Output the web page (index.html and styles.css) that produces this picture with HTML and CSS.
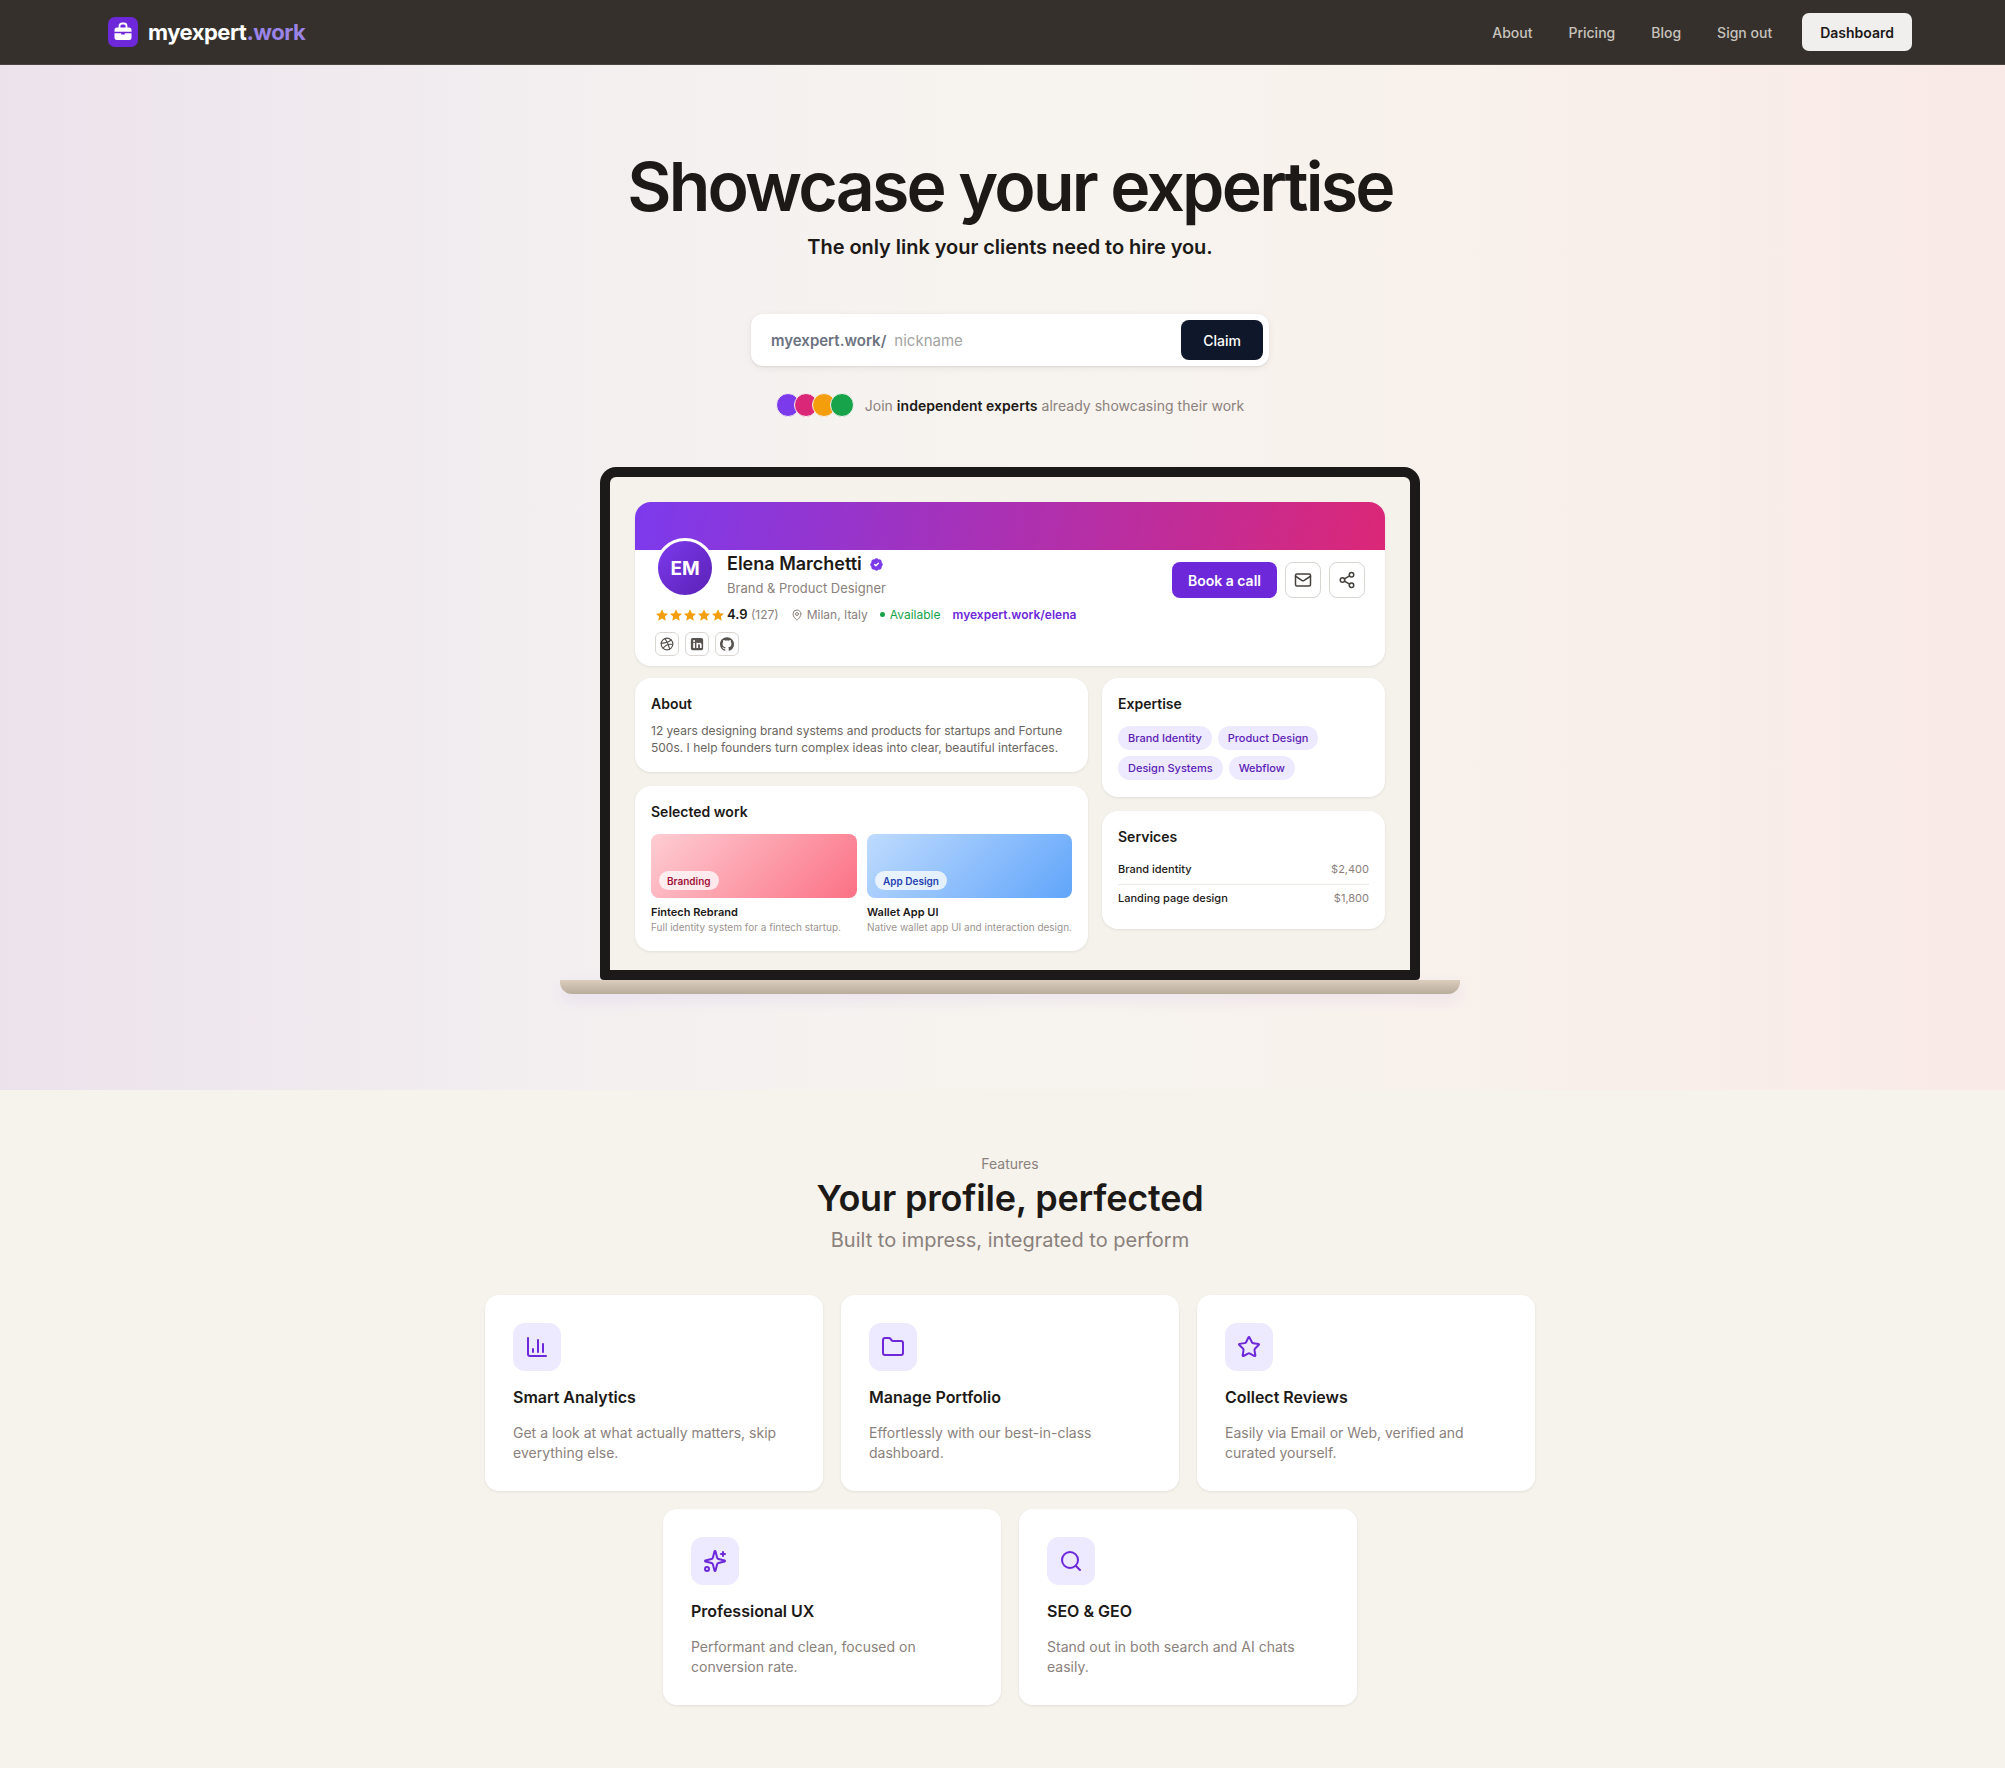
FILE: index.html
```html
<!DOCTYPE html>
<html>
<head>
    <title>myexpert.work</title>
    <meta charset="UTF-8">
    <meta name="viewport" content="width=device-width, initial-scale=1.0">
    <link rel="stylesheet" href="styles.css">
</head>
<body>
    <div class="page">
        <header class="topbar">
            <a class="logo" href="#">
                <span class="logo-mark">
                    <svg width="22" height="22" viewBox="0 0 22 22">
                        <path d="M7.500 7V5A2.500 2.500 0 0 1 10 2.500h2A2.500 2.500 0 0 1 14.500 5v2" fill="none" stroke="#fff" stroke-width="1.800"/>
                        <path d="M5 6.500h12a2.500 2.500 0 0 1 2.500 2.500v1.800H2.500V9A2.500 2.500 0 0 1 5 6.500z" fill="#fff"/>
                        <path d="M2.500 12.200h6.700v1.300h3.600v-1.300h6.700v4.300a2.500 2.500 0 0 1-2.500 2.500H5a2.500 2.500 0 0 1-2.500-2.500z" fill="#fff"/>
                    </svg>
                </span>
                <span class="logo-text">myexpert<em>.work</em></span>
            </a>
            <nav class="topnav">
                <a href="#">About</a>
                <a href="#">Pricing</a>
                <a href="#">Blog</a>
                <a href="#">Sign out</a>
                <a class="dash-button" href="#">Dashboard</a>
            </nav>
        </header>

        <section class="hero">
            <h1>Showcase your expertise</h1>
            <p class="hero-sub">The only link your clients need to hire you.</p>

            <form class="claim-form">
                <span class="claim-prefix">myexpert.work/</span>
                <input class="claim-input" type="text" placeholder="nickname">
                <button class="claim-button" type="button">Claim</button>
            </form>

            <div class="join-row">
                <div class="join-dots">
                    <span class="dot-purple"></span>
                    <span class="dot-pink"></span>
                    <span class="dot-amber"></span>
                    <span class="dot-green"></span>
                </div>
                <p>Join <strong>independent experts</strong> already showcasing their work</p>
            </div>

            <div class="laptop">
                <div class="laptop-frame">
                    <div class="laptop-screen">
                        <div class="profile-card">
                            <div class="profile-banner"></div>
                            <div class="profile-body">
                                <div class="profile-head">
                                    <div class="avatar">EM</div>
                                    <div class="profile-info">
                                        <div class="profile-name">
                                            Elena Marchetti
                                            <svg width="15" height="15" viewBox="0 0 24 24">
                                                <path d="M3.850 8.620a4 4 0 0 1 4.780-4.770 4 4 0 0 1 6.740 0 4 4 0 0 1 4.780 4.780 4 4 0 0 1 0 6.740 4 4 0 0 1-4.770 4.780 4 4 0 0 1-6.750 0 4 4 0 0 1-4.780-4.770 4 4 0 0 1 0-6.760z" fill="#7c3aed"/>
                                                <path d="m9 12 2 2 4-4" fill="none" stroke="#fff" stroke-width="2.400" stroke-linecap="round" stroke-linejoin="round"/>
                                            </svg>
                                        </div>
                                        <div class="profile-role">Brand &amp; Product Designer</div>
                                    </div>
                                    <div class="profile-actions">
                                        <button class="book-button" type="button">Book a call</button>
                                        <button class="icon-button" type="button">
                                            <svg width="18" height="18" viewBox="0 0 24 24" fill="none" stroke="#44403c" stroke-width="2" stroke-linecap="round" stroke-linejoin="round">
                                                <rect x="2" y="4" width="20" height="16" rx="2"/>
                                                <path d="m22 7-8.970 5.700a1.940 1.940 0 0 1-2.060 0L2 7"/>
                                            </svg>
                                        </button>
                                        <button class="icon-button" type="button">
                                            <svg width="18" height="18" viewBox="0 0 24 24" fill="none" stroke="#44403c" stroke-width="2" stroke-linecap="round" stroke-linejoin="round">
                                                <circle cx="18" cy="5" r="3"/>
                                                <circle cx="6" cy="12" r="3"/>
                                                <circle cx="18" cy="19" r="3"/>
                                                <path d="m8.590 13.510 6.830 3.980"/>
                                                <path d="m15.410 6.510-6.820 3.980"/>
                                            </svg>
                                        </button>
                                    </div>
                                </div>
                                <div class="profile-meta">
                                    <span class="stars">
                                        <svg width="14" height="14" viewBox="1.500 1.500 21 21"><path d="m12 3.500 2.700 5.700 6.300.800-4.600 4.300 1.200 6.200-5.600-3.100-5.600 3.100 1.200-6.200L3 10l6.300-.800z"/></svg>
                                        <svg width="14" height="14" viewBox="1.500 1.500 21 21"><path d="m12 3.500 2.700 5.700 6.300.800-4.600 4.300 1.200 6.200-5.600-3.100-5.600 3.100 1.200-6.200L3 10l6.300-.800z"/></svg>
                                        <svg width="14" height="14" viewBox="1.500 1.500 21 21"><path d="m12 3.500 2.700 5.700 6.300.800-4.600 4.300 1.200 6.200-5.600-3.100-5.600 3.100 1.200-6.200L3 10l6.300-.800z"/></svg>
                                        <svg width="14" height="14" viewBox="1.500 1.500 21 21"><path d="m12 3.500 2.700 5.700 6.300.800-4.600 4.300 1.200 6.200-5.600-3.100-5.600 3.100 1.200-6.200L3 10l6.300-.800z"/></svg>
                                        <svg width="14" height="14" viewBox="1.500 1.500 21 21"><path d="m12 3.500 2.700 5.700 6.300.800-4.600 4.300 1.200 6.200-5.600-3.100-5.600 3.100 1.200-6.200L3 10l6.300-.800z"/></svg>
                                    </span>
                                    <span class="rating"><strong>4.9</strong> <span>(127)</span></span>
                                    <span class="location">
                                        <svg width="12" height="12" viewBox="0 0 24 24" fill="none" stroke="#8a817c" stroke-width="2" stroke-linecap="round" stroke-linejoin="round">
                                            <path d="M20 10c0 5-5.500 10.200-7.400 11.800a1 1 0 0 1-1.200 0C9.500 20.200 4 15 4 10a8 8 0 0 1 16 0"/>
                                            <circle cx="12" cy="10" r="3"/>
                                        </svg>
                                        Milan, Italy
                                    </span>
                                    <span class="available">Available</span>
                                    <a class="profile-link" href="#">myexpert.work/elena</a>
                                </div>
                                <div class="profile-socials">
                                    <span class="social-icon">
                                        <svg width="14" height="14" viewBox="0 0 24 24" fill="none" stroke="#57534e" stroke-width="2" stroke-linecap="round">
                                            <circle cx="12" cy="12" r="10"/>
                                            <path d="M19.130 5.090C15.220 9.140 10 10.440 2.250 10.940"/>
                                            <path d="M21.750 12.840c-6.620-1.410-12.140 1-16.380 6.320"/>
                                            <path d="M8.560 2.750c4.370 6 6 9.420 8 17.720"/>
                                        </svg>
                                    </span>
                                    <span class="social-icon">
                                        <svg width="14" height="14" viewBox="0 0 24 24">
                                            <rect x="1.500" y="1.500" width="21" height="21" rx="3" fill="#57534e"/>
                                            <rect x="5.500" y="10" width="3" height="9" fill="#fff"/>
                                            <circle cx="7" cy="6.800" r="1.800" fill="#fff"/>
                                            <path d="M11 10h2.800v1.300c.6-1 1.700-1.500 2.800-1.500 2.500 0 3.400 1.600 3.400 4.100V19h-3v-4.500c0-1.200-.4-2-1.500-2-1.200 0-1.600.9-1.600 2V19H11z" fill="#fff"/>
                                        </svg>
                                    </span>
                                    <span class="social-icon">
                                        <svg width="14" height="14" viewBox="0 0 24 24" fill="#57534e">
                                            <path d="M12 .297c-6.630 0-12 5.373-12 12 0 5.303 3.438 9.800 8.205 11.385.600.113.820-.258.820-.577 0-.285-.010-1.040-.015-2.040-3.338.724-4.042-1.610-4.042-1.610C4.422 18.070 3.633 17.700 3.633 17.700c-1.087-.744.084-.729.084-.729 1.205.084 1.838 1.236 1.838 1.236 1.070 1.835 2.809 1.305 3.495.998.108-.776.417-1.305.760-1.605-2.665-.300-5.466-1.332-5.466-5.930 0-1.310.465-2.380 1.235-3.220-.135-.303-.540-1.523.105-3.176 0 0 1.005-.322 3.300 1.230.960-.267 1.980-.399 3-.405 1.020.006 2.040.138 3 .405 2.280-1.552 3.285-1.230 3.285-1.230.645 1.653.240 2.873.120 3.176.765.840 1.230 1.910 1.230 3.220 0 4.610-2.805 5.625-5.475 5.920.420.360.810 1.096.810 2.220 0 1.606-.015 2.896-.015 3.286 0 .315.210.690.825.570C20.565 22.092 24 17.592 24 12.297c0-6.627-5.373-12-12-12"/>
                                        </svg>
                                    </span>
                                </div>
                            </div>
                        </div>

                        <div class="profile-grid">
                            <div class="profile-col">
                                <div class="mini-card">
                                    <h3>About</h3>
                                    <p class="about-text">12 years designing brand systems and products for startups and Fortune 500s. I help founders turn complex ideas into clear, beautiful interfaces.</p>
                                </div>
                                <div class="mini-card">
                                    <h3>Selected work</h3>
                                    <div class="work-grid">
                                        <div class="work-item">
                                            <div class="work-thumb thumb-pink"><span class="thumb-tag tag-rose">Branding</span></div>
                                            <div class="work-title">Fintech Rebrand</div>
                                            <div class="work-desc">Full identity system for a fintech startup.</div>
                                        </div>
                                        <div class="work-item">
                                            <div class="work-thumb thumb-blue"><span class="thumb-tag tag-blue">App Design</span></div>
                                            <div class="work-title">Wallet App UI</div>
                                            <div class="work-desc">Native wallet app UI and interaction design.</div>
                                        </div>
                                    </div>
                                </div>
                            </div>
                            <div class="profile-col">
                                <div class="mini-card">
                                    <h3>Expertise</h3>
                                    <div class="tag-list">
                                        <span>Brand Identity</span>
                                        <span>Product Design</span>
                                        <span>Design Systems</span>
                                        <span>Webflow</span>
                                    </div>
                                </div>
                                <div class="mini-card">
                                    <h3>Services</h3>
                                    <div class="service-row"><span>Brand identity</span><span class="price">$2,400</span></div>
                                    <div class="service-row"><span>Landing page design</span><span class="price">$1,800</span></div>
                                </div>
                            </div>
                        </div>
                    </div>
                </div>
                <div class="laptop-base"></div>
            </div>
        </section>

        <section class="features">
            <div class="features-label">Features</div>
            <h2>Your profile, perfected</h2>
            <p class="features-sub">Built to impress, integrated to perform</p>

            <div class="feature-grid">
                <div class="feature-card">
                    <div class="feature-icon">
                        <svg width="24" height="24" viewBox="0 0 24 24" fill="none" stroke="currentColor" stroke-width="2" stroke-linecap="round" stroke-linejoin="round">
                            <path d="M3 3v16a2 2 0 0 0 2 2h16"/>
                            <path d="M8 17v-3"/>
                            <path d="M13 17V5"/>
                            <path d="M18 17V9"/>
                        </svg>
                    </div>
                    <h3>Smart Analytics</h3>
                    <p>Get a look at what actually matters, skip everything else.</p>
                </div>
                <div class="feature-card">
                    <div class="feature-icon">
                        <svg width="24" height="24" viewBox="0 0 24 24" fill="none" stroke="currentColor" stroke-width="2" stroke-linecap="round" stroke-linejoin="round">
                            <path d="M20 20a2 2 0 0 0 2-2V8a2 2 0 0 0-2-2h-7.900a2 2 0 0 1-1.690-.9L9.600 3.900A2 2 0 0 0 7.930 3H4a2 2 0 0 0-2 2v13a2 2 0 0 0 2 2Z"/>
                        </svg>
                    </div>
                    <h3>Manage Portfolio</h3>
                    <p>Effortlessly with our best-in-class dashboard.</p>
                </div>
                <div class="feature-card">
                    <div class="feature-icon">
                        <svg width="24" height="24" viewBox="0 0 24 24" fill="none" stroke="currentColor" stroke-width="2" stroke-linecap="round" stroke-linejoin="round">
                            <path d="M11.520 2.300a.530.530 0 0 1 .960 0l2.310 4.680a2.120 2.120 0 0 0 1.600 1.160l5.160.760a.530.530 0 0 1 .300.910l-3.740 3.640a2.120 2.120 0 0 0-.610 1.880l.880 5.140a.530.530 0 0 1-.780.560l-4.620-2.430a2.120 2.120 0 0 0-1.970 0L6.400 21.010a.530.530 0 0 1-.770-.560l.880-5.140a2.120 2.120 0 0 0-.610-1.880L2.160 9.790a.530.530 0 0 1 .290-.910l5.170-.760a2.120 2.120 0 0 0 1.590-1.160z"/>
                        </svg>
                    </div>
                    <h3>Collect Reviews</h3>
                    <p>Easily via Email or Web, verified and curated yourself.</p>
                </div>
                <div class="feature-card">
                    <div class="feature-icon">
                        <svg width="24" height="24" viewBox="0 0 24 24" fill="none" stroke="currentColor" stroke-width="2" stroke-linecap="round" stroke-linejoin="round">
                            <path d="M9.940 15.500A2 2 0 0 0 8.500 14.060l-6.130-1.580a.500.500 0 0 1 0-.960L8.500 9.940A2 2 0 0 0 9.940 8.500l1.580-6.130a.500.500 0 0 1 .960 0L14.060 8.500A2 2 0 0 0 15.500 9.940l6.130 1.580a.500.500 0 0 1 0 .960L15.500 14.060a2 2 0 0 0-1.440 1.440l-1.580 6.130a.500.500 0 0 1-.960 0z"/>
                            <path d="M20 3v4"/>
                            <path d="M22 5h-4"/>
                            <circle cx="4" cy="20" r="2"/>
                        </svg>
                    </div>
                    <h3>Professional UX</h3>
                    <p>Performant and clean, focused on conversion rate.</p>
                </div>
                <div class="feature-card">
                    <div class="feature-icon">
                        <svg width="24" height="24" viewBox="0 0 24 24" fill="none" stroke="currentColor" stroke-width="2" stroke-linecap="round" stroke-linejoin="round">
                            <circle cx="11" cy="11" r="8"/>
                            <path d="m21 21-4.300-4.300"/>
                        </svg>
                    </div>
                    <h3>SEO &amp; GEO</h3>
                    <p>Stand out in both search and AI chats easily.</p>
                </div>
            </div>
        </section>
    </div>
</body>
</html>
```

FILE: styles.css
```css
html {
    overflow-x: hidden;
}
body {
    margin: 0;
    font-family: Inter, "Liberation Sans", sans-serif;
    background: #f6f3ed;
    color: #1c1917;
}
a {
    text-decoration: none;
    color: inherit;
}
.page {
    width: 2020px;
}

/* top bar */
.topbar {
    height: 64px;
    padding: 0 108px;
    display: flex;
    align-items: center;
    justify-content: space-between;
    background: #35302c;
    border-bottom: 1px solid #4a4540;
}
.logo {
    display: flex;
    align-items: center;
    gap: 10px;
}
.logo-mark {
    width: 30px;
    height: 30px;
    border-radius: 7px;
    background: #6d28d9;
    display: flex;
    align-items: center;
    justify-content: center;
}
.logo-text {
    color: #fff;
    font-size: 22px;
    font-weight: 700;
    letter-spacing: -0.5px;
}
.logo-text em {
    font-style: normal;
    color: #9a84e6;
}
.topnav {
    display: flex;
    align-items: center;
    gap: 36px;
    font-size: 14px;
    font-weight: 500;
    color: #c8c3bd;
}
.dash-button {
    margin-left: -6px;
    height: 38px;
    padding: 0 18px;
    display: flex;
    align-items: center;
    border-radius: 7px;
    background: #f0efed;
    color: #1c1917;
    font-weight: 600;
}

/* hero */
.hero {
    padding: 84px 0 96px;
    display: flex;
    flex-direction: column;
    align-items: center;
    background: linear-gradient(90deg, #ece2ec 0%, #f3eff0 28%, #f7f4ef 50%, #f8f1ec 72%, #f9e9e7 100%);
}
.hero h1 {
    margin: 0;
    font-size: 68px;
    line-height: 75px;
    font-weight: 600;
    letter-spacing: -2.8px;
    color: #1c1917;
}
.hero-sub {
    margin: 9px 0 0;
    font-size: 20px;
    line-height: 28px;
    font-weight: 600;
    letter-spacing: -0.05px;
}
.claim-form {
    margin-top: 53px;
    width: 518px;
    height: 52px;
    box-sizing: border-box;
    padding: 0 6px 0 20px;
    display: flex;
    align-items: center;
    background: #fff;
    border-radius: 12px;
    box-shadow: 0 1px 2px rgba(0,0,0,0.08), 0 2px 8px rgba(0,0,0,0.06);
}
.claim-prefix {
    font-size: 15px;
    font-weight: 600;
    color: #6b7280;
}
.claim-input {
    flex: 1;
    min-width: 0;
    margin-left: 8px;
    padding: 0;
    border: none;
    outline: none;
    background: none;
    font-family: inherit;
    font-size: 15px;
}
.claim-input::placeholder {
    color: #a3a3a3;
}
.claim-button {
    width: 82px;
    height: 40px;
    border: none;
    border-radius: 8px;
    background: #0f172a;
    color: #fff;
    font-family: inherit;
    font-size: 14px;
    font-weight: 500;
}
.join-row {
    margin-top: 27px;
    display: flex;
    align-items: center;
    gap: 11px;
    font-size: 14px;
    letter-spacing: 0.03px;
    color: #8a817c;
}
.join-row p {
    margin: 0;
}
.join-row strong {
    color: #1c1917;
    font-weight: 600;
}
.join-dots {
    display: flex;
}
.join-dots span {
    width: 24px;
    height: 24px;
    margin-left: -6px;
    border-radius: 50%;
    border: 1px solid #f6f2ef;
    box-sizing: border-box;
}
.join-dots span:first-child {
    margin-left: 0;
}
.dot-purple { background: #7c3aed; }
.dot-pink { background: #db2777; }
.dot-amber { background: #f59e0b; }
.dot-green { background: #16a34a; }

/* laptop mock */
.laptop {
    margin-top: 50px;
    display: flex;
    flex-direction: column;
    align-items: center;
}
.laptop-frame {
    width: 820px;
    box-sizing: border-box;
    padding: 10px;
    background: #1c1a19;
    border-radius: 16px 16px 4px 4px;
}
.laptop-screen {
    padding: 25px 25px 19px;
    background: #f5f2ec;
    border-radius: 6px 6px 0 0;
}
.laptop-base {
    width: 900px;
    height: 14px;
    border-radius: 0 0 12px 12px;
    background: linear-gradient(180deg, #dccdbd 0%, #b8ac9b 100%);
    box-shadow: 0 6px 16px rgba(109,40,217,0.08);
}
.profile-card {
    background: #fff;
    border-radius: 16px;
    overflow: hidden;
    box-shadow: 0 1px 3px rgba(0,0,0,0.08);
}
.profile-banner {
    height: 48px;
    background: linear-gradient(100deg, #7c3aed 0%, #db2777 100%);
}
.profile-body {
    padding: 0 20px 10px;
}
.profile-head {
    display: flex;
    align-items: flex-start;
}
.avatar {
    width: 54px;
    height: 54px;
    margin-top: -12px;
    border: 3px solid #fff;
    border-radius: 50%;
    display: flex;
    align-items: center;
    justify-content: center;
    background: linear-gradient(135deg, #7c3aed, #5b21b6);
    color: #fff;
    font-size: 19px;
    font-weight: 700;
}
.profile-info {
    margin-left: 12px;
    padding-top: 3px;
}
.profile-name {
    display: flex;
    align-items: center;
    gap: 7px;
    font-size: 18px;
    line-height: 22px;
    font-weight: 600;
}
.profile-role {
    margin-top: 4px;
    font-size: 13px;
    line-height: 18px;
    color: #8a817c;
}
.profile-actions {
    margin-left: auto;
    margin-top: 12px;
    display: flex;
    gap: 8px;
}
.book-button {
    width: 105px;
    height: 36px;
    border: none;
    border-radius: 8px;
    background: #6d28d9;
    color: #fff;
    font-family: inherit;
    font-size: 14px;
    font-weight: 600;
}
.icon-button {
    width: 36px;
    height: 36px;
    padding: 0;
    display: flex;
    align-items: center;
    justify-content: center;
    background: #fff;
    border: 1px solid #d9d6d2;
    border-radius: 8px;
}
.profile-meta {
    margin-top: 7px;
    display: flex;
    align-items: center;
    font-size: 12px;
    line-height: 18px;
    color: #8a817c;
}
.stars {
    display: flex;
    fill: #f59e0b;
}
.rating {
    margin-left: 2px;
}
.rating strong {
    color: #1c1917;
    font-size: 13px;
    font-weight: 600;
}
.location {
    margin-left: 12px;
    display: flex;
    align-items: center;
    gap: 4px;
}
.available {
    margin-left: 12px;
    display: flex;
    align-items: center;
    gap: 5px;
    color: #16a34a;
}
.available::before {
    content: "";
    width: 5px;
    height: 5px;
    border-radius: 50%;
    background: #16a34a;
}
.profile-link {
    margin-left: 12px;
    color: #6d28d9;
    font-weight: 600;
}
.profile-socials {
    margin-top: 8px;
    display: flex;
    gap: 6px;
}
.social-icon {
    width: 22px;
    height: 22px;
    display: flex;
    align-items: center;
    justify-content: center;
    border: 1px solid #d9d6d2;
    border-radius: 6px;
}
.profile-grid {
    margin-top: 12px;
    display: grid;
    grid-template-columns: 453px 283px;
    gap: 14px;
    align-items: start;
}
.profile-col {
    display: flex;
    flex-direction: column;
    gap: 14px;
}
.mini-card {
    padding: 16px;
    background: #fff;
    border-radius: 16px;
    box-shadow: 0 1px 3px rgba(0,0,0,0.08);
}
.mini-card h3 {
    margin: 0;
    font-size: 14px;
    line-height: 20px;
    font-weight: 600;
}
.about-text {
    margin: 8px 0 0;
    font-size: 12px;
    line-height: 17px;
    color: #6b6560;
}
.work-grid {
    margin-top: 12px;
    display: grid;
    grid-template-columns: 206px 205px;
    gap: 10px;
}
.work-thumb {
    position: relative;
    height: 64px;
    border-radius: 8px;
}
.thumb-pink { background: linear-gradient(135deg, #fecdd3, #fb7185); }
.thumb-blue { background: linear-gradient(135deg, #bfdbfe, #60a5fa); }
.thumb-tag {
    position: absolute;
    left: 8px;
    bottom: 8px;
    height: 19px;
    padding: 0 8px;
    display: flex;
    align-items: center;
    border-radius: 10px;
    background: rgba(255,255,255,0.75);
    font-size: 10px;
    font-weight: 600;
}
.tag-rose { color: #9f1239; }
.tag-blue { color: #1e40af; }
.work-title {
    margin-top: 7px;
    font-size: 11px;
    line-height: 15px;
    font-weight: 600;
}
.work-desc {
    font-size: 10px;
    line-height: 15px;
    color: #9a9490;
    white-space: nowrap;
}
.tag-list {
    margin: 12px 0 1px;
    display: flex;
    flex-wrap: wrap;
    gap: 6px;
}
.tag-list span {
    height: 24px;
    padding: 0 10px;
    display: flex;
    align-items: center;
    border-radius: 12px;
    background: #ede9fe;
    color: #5b21b6;
    font-size: 11px;
    font-weight: 500;
}
.service-row {
    display: flex;
    justify-content: space-between;
    padding: 6px 0 8px;
    font-size: 11px;
    line-height: 14px;
    font-weight: 500;
}
.service-row + .service-row {
    border-top: 1px solid #ece9e5;
}
.mini-card h3 + .service-row {
    margin-top: 9px;
}
.price {
    color: #8a817c;
    font-weight: 400;
}

/* features */
.features {
    padding: 64px 0 63px;
    display: flex;
    flex-direction: column;
    align-items: center;
}
.features-label {
    font-size: 14px;
    line-height: 20px;
    color: #8a817c;
}
.features h2 {
    margin: 2px 0 0;
    font-size: 36px;
    line-height: 44px;
    font-weight: 600;
    letter-spacing: -0.2px;
}
.features-sub {
    margin: 6px 0 0;
    font-size: 20px;
    line-height: 28px;
    color: #8a817c;
}
.feature-grid {
    margin-top: 41px;
    width: 1050px;
    display: flex;
    flex-wrap: wrap;
    justify-content: center;
    gap: 18px;
}
.feature-card {
    width: 338px;
    height: 196px;
    box-sizing: border-box;
    padding: 28px;
    background: #fff;
    border-radius: 14px;
    box-shadow: 0 1px 3px rgba(0,0,0,0.08);
}
.feature-icon {
    width: 48px;
    height: 48px;
    display: flex;
    align-items: center;
    justify-content: center;
    border-radius: 12px;
    background: #ede9fe;
    color: #6d28d9;
}
.feature-card h3 {
    margin: 14px 0 0;
    font-size: 16px;
    line-height: 24px;
    font-weight: 600;
}
.feature-card p {
    margin: 14px 0 0;
    font-size: 14px;
    line-height: 20px;
    color: #8a817c;
}
```
